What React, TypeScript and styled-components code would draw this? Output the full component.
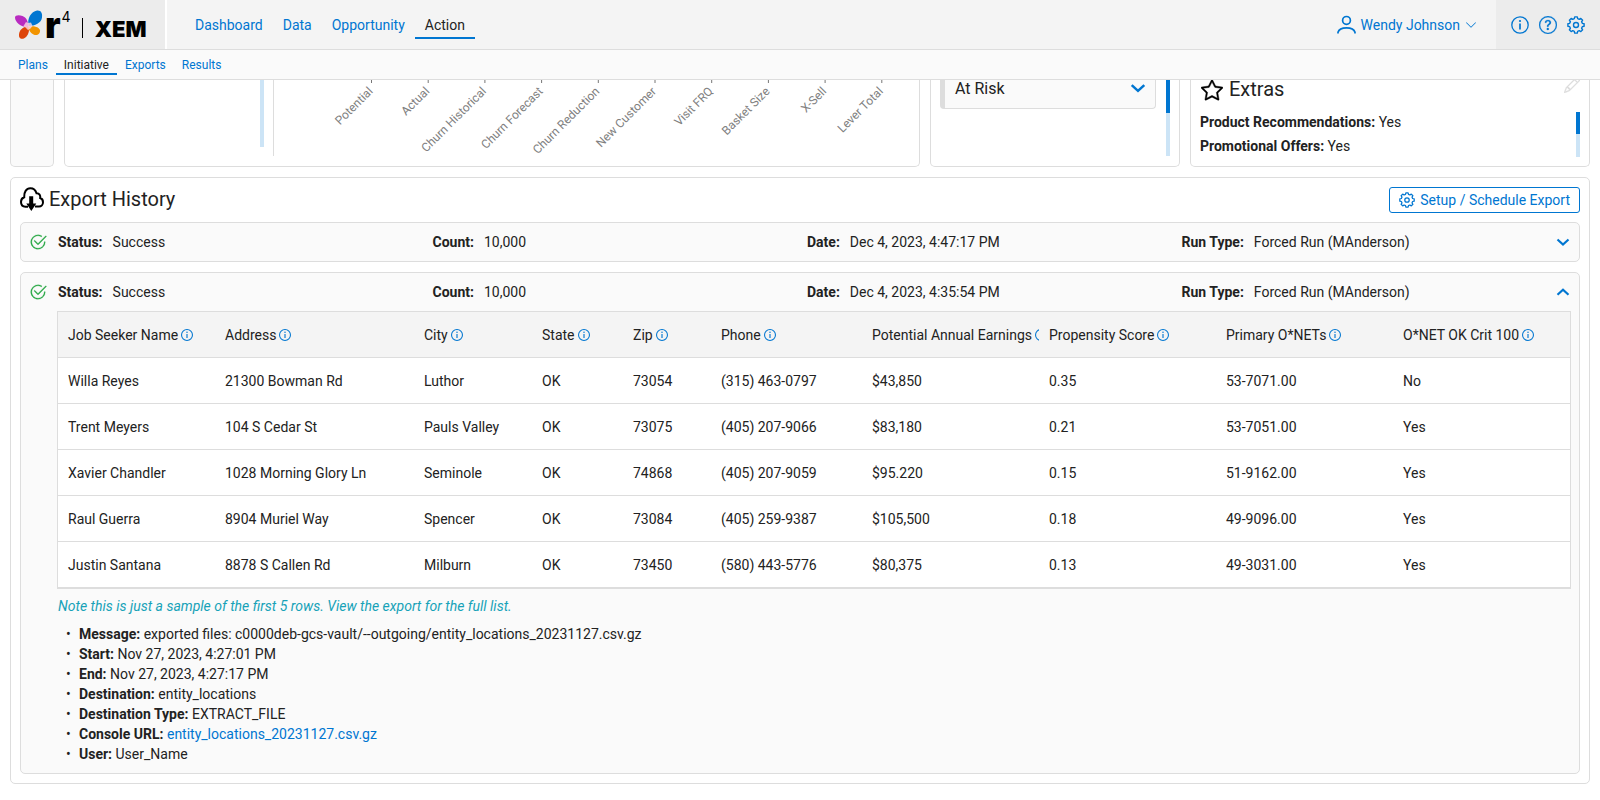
import React, { useState } from "react";
import styled, { createGlobalStyle, css } from "styled-components";
import {
  BsCheck2Circle,
  BsChevronDown,
  BsPencil,
  BsQuestionCircle,
  BsStar,
} from "react-icons/bs";

const color = {
  blue: "#0076d1",
  paleBlue: "#cce4f6",
  text: "#222222",
  line: "#dddddd",
  panel: "#fafafa",
  bar: "#f4f4f4",
  barDark: "#ececec",
  green: "#28a745",
  teal: "#17a2b8",
};

const GlobalStyle = createGlobalStyle`
  *, *::before, *::after { box-sizing: border-box; }
  body {
    margin: 0;
    background: #ffffff;
    color: ${color.text};
    font: 400 14px/20px Roboto, "Liberation Sans", sans-serif;
  }
  svg { display: block; flex: none; }
  button { font: inherit; color: inherit; cursor: pointer; }
  a { color: ${color.blue}; text-decoration: none; }
`;

/* ---------- header ---------- */

const TopBar = styled.header`
  display: flex;
  height: 50px;
  background: ${color.bar};
  border-bottom: 1px solid ${color.line};
`;

const Brand = styled.a`
  display: flex;
  align-items: center;
  width: 167px;
  padding-left: 14px;
  background: ${color.barDark};
  border-right: 2px solid #ffffff;
  color: #000000;
  font-family: Inter, Roboto, sans-serif;
`;

const BrandLetter = styled.span`
  margin-left: 2px;
  font-size: 36px;
  line-height: 36px;
  font-weight: 900;
`;

const BrandPower = styled.sup`
  align-self: flex-start;
  margin-left: 1px;
  padding-top: 9px;
  font-size: 14px;
  line-height: 16px;
  font-weight: 400;
`;

const BrandRule = styled.span`
  width: 1px;
  height: 20px;
  margin: 6px 12px 0 11px;
  background: #000000;
`;

const BrandProduct = styled.span`
  padding-top: 8px;
  font-size: 22px;
  line-height: 20px;
  font-weight: 900;
`;

const NavList = styled.nav<{ $small?: boolean }>`
  display: flex;
  align-items: flex-end;
  ${(p) =>
    p.$small
      ? css`
          position: relative;
          z-index: 1;
          height: 30px;
          padding: 0 10px 4px;
          background: ${color.panel};
          border-bottom: 1px solid ${color.line};
          font-size: 12px;
        `
      : css`
          padding: 0 18px 10px;
        `}
`;

const NavLink = styled.a<{ $active?: boolean; $small?: boolean }>`
  padding: ${(p) => (p.$small ? "0 8px" : "0 10px 2px")};
  line-height: ${(p) => (p.$small ? "16px" : "20px")};
  border-bottom: 2px solid ${(p) => (p.$active ? color.blue : "transparent")};
  color: ${(p) => (p.$active ? color.text : color.blue)};
`;

const UserButton = styled.button`
  display: flex;
  align-items: center;
  gap: 5px;
  margin-left: auto;
  padding: 0 19px;
  border: 0;
  background: none;
  color: ${color.blue};
`;

const Tools = styled.div`
  display: flex;
  align-items: center;
  gap: 10px;
  padding: 0 15px;
  background: ${color.barDark};
`;

const IconButton = styled.button`
  display: block;
  padding: 0;
  border: 0;
  background: none;
  color: ${color.blue};
`;

/* ---------- upper cards ---------- */

const CardRow = styled.section`
  display: grid;
  grid-template-columns: 44px minmax(0, 1fr) 250px 400px;
  gap: 10px;
  padding: 0 10px;
`;

const CardEnd = styled.div<{ $tinted?: boolean }>`
  display: flex;
  min-height: 87px;
  padding: 0 9px 10px;
  border: solid ${color.line};
  border-width: 0 1px 1px;
  border-radius: 0 0 5px 5px;
  background: ${(p) => (p.$tinted ? color.panel : "#ffffff")};
`;

const Track = styled.div<{ $height: number; $thumb?: number }>`
  flex: none;
  width: 4px;
  height: ${(p) => p.$height}px;
  background: ${color.paleBlue};
  &::before {
    content: "";
    display: block;
    height: ${(p) => p.$thumb ?? 0}px;
    background: ${color.blue};
  }
`;

const ListPane = styled.div`
  display: flex;
  justify-content: flex-end;
  width: 190px;
`;

const ChartPane = styled.div`
  flex: 1;
  min-width: 0;
  margin-left: 9px;
  border-left: 1px solid ${color.line};
  svg { width: 100%; }
`;

const SegmentButton = styled.button`
  display: flex;
  flex: 1;
  align-items: flex-start;
  justify-content: space-between;
  align-self: flex-start;
  height: 29px;
  margin-right: 10px;
  padding: 0 9px 0 10px;
  border: solid ${color.line};
  border-width: 0 1px 1px 5px;
  border-radius: 0 0 4px 4px;
  background: ${color.panel};
  font-size: 16px;
  line-height: 17px;
`;

const ExtrasCard = styled(CardEnd)`
  display: block;
  padding-bottom: 8px;
`;

const Heading = styled.h2`
  display: flex;
  align-items: center;
  gap: 5px;
  margin: 0;
  font-size: 20px;
  line-height: 24px;
  font-weight: 400;
`;

const EditButton = styled(IconButton)`
  display: flex;
  align-items: flex-end;
  height: 13px;
  overflow: hidden;
  color: ${color.line};
`;

const ExtrasHead = styled.div`
  display: flex;
  align-items: flex-start;
  justify-content: space-between;
  height: 30px;
  ${Heading} {
    height: 18px;
    line-height: 18px;
  }
  ${Heading} svg {
    margin: 2px 1px 0;
    color: #000000;
  }
`;

const ExtrasBody = styled.div`
  display: flex;
  align-items: center;
  justify-content: space-between;
  p { margin: 0; line-height: 24px; }
`;

/* ---------- export history ---------- */

const History = styled.section`
  display: flex;
  flex-direction: column;
  gap: 10px;
  margin: 10px;
  padding: 9px;
  border: 1px solid ${color.line};
  border-radius: 5px;
`;

const HistoryHead = styled.div`
  display: flex;
  align-items: flex-start;
  justify-content: space-between;
  margin-bottom: -1px;
`;

const OutlineButton = styled.button`
  display: flex;
  align-items: center;
  gap: 5px;
  height: 26px;
  padding: 0 9px;
  border: 1px solid ${color.blue};
  border-radius: 3px;
  background: #ffffff;
  color: ${color.blue};
`;

const RunCard = styled.article`
  border: 1px solid ${color.line};
  border-radius: 5px;
  background: ${color.panel};
`;

const RunHead = styled.div`
  display: flex;
  align-items: center;
  height: 38px;
  padding: 0 9px 0 8px;
  > svg { color: ${color.green}; }
`;

const RunFacts = styled.dl`
  display: grid;
  flex: 1;
  grid-template-columns: repeat(4, 1fr);
  margin: 0 0 0 11px;
  div { display: flex; gap: 10px; }
  dt { font-weight: 700; }
  dd { margin: 0; }
`;

const RunBody = styled.div`
  padding: 0 8px 9px 36px;
`;

const TableFrame = styled.div`
  border: 1px solid ${color.line};
  background: #ffffff;
`;

const SampleTable = styled.table`
  width: 100%;
  table-layout: fixed;
  border-spacing: 0;
  th, td {
    height: 46px;
    padding: 0 0 0 10px;
    border-bottom: 1px solid ${color.line};
    text-align: left;
    font-weight: 400;
    white-space: nowrap;
    overflow: hidden;
  }
  th { background: ${color.bar}; }
`;

const ColumnLabel = styled.div`
  display: flex;
  align-items: center;
  gap: 3px;
`;

const Note = styled.p`
  margin: 7px 0 8px 1px;
  color: ${color.teal};
  font-style: italic;
`;

const Details = styled.ul`
  margin: 0;
  padding: 0 0 0 22px;
  list-style: none;
  li::before {
    content: "•";
    display: inline-block;
    width: 13px;
    margin-left: -13px;
  }
`;

/* ---------- drawings ---------- */

const Butterfly = () => (
  <svg width="29" height="30" viewBox="0 0 29 30" aria-hidden="true">
    <path d="M14.500 16C13 8 17 2 23 .6 27 .2 28.500 3 28 7.500 27.300 13 21 16 14.500 16Z" fill="#0076d1" />
    <path d="M14.500 17C7 17.500 1 12 1 7.500 1 5 5 4.600 8.500 6 12.500 7.600 14 11 14.500 17Z" fill="#b92bc0" />
    <path d="M14.500 16.500C8 16.500 4.500 21 5 26 5.400 29.500 9.500 29.800 12.500 26.500 15 23.500 15.500 20 14.500 16.500Z" fill="#dd4409" />
    <path d="M14.500 16.500C20 15.500 25.500 17 26 20.500 26.400 24 23 26 19.500 24.500 16 23 14.500 19.500 14.500 16.500Z" fill="#f29400" />
    <path d="M12 12C13.500 13 15.500 13 17 12.500L18.500 16 16.500 18.500 14 20 11.500 17.500 9.500 16Z" fill="#ffd9e6" opacity=".8" />
  </svg>
);

const CloudExport = () => (
  <svg width="24" height="24" viewBox="0 0 24 24" fill="none" aria-hidden="true">
    <path
      d="M8 19.800H5.500C2.600 19.500 1 17.400 1 14.900 1 12.700 2.200 10.900 4.200 10.200 3.800 5.300 6.300 1.200 10.300 1.200 13.600 1.200 15.700 3.300 16.500 6.300 19.300 6.200 20.700 8.300 20.200 11 22 11.600 23 13.200 23 15.200 23 17.600 21.300 19.400 19 19.400H15"
      stroke="#000"
      strokeWidth="2"
    />
    <path d="M9.200 9.200H13.200V16.500H16.300L11.300 24 6.300 16.500H9.200Z" fill="#000" />
  </svg>
);

const Person = () => (
  <svg width="19" height="19" viewBox="0 0 19 19" fill="none" stroke="currentColor" strokeWidth="1.700" aria-hidden="true">
    <circle cx="9.500" cy="5.400" r="3.900" />
    <path d="M1 18.500V17.300C1.800 14.600 5.200 12.900 9.500 12.900 13.800 12.900 17.200 14.600 18 17.300V18.500" />
  </svg>
);

const Info = ({ size }: { size: number }) => (
  <svg width={size} height={size} viewBox="0 0 18 18" fill="none" stroke="currentColor" strokeWidth={size > 14 ? 1.3 : 1.6} aria-hidden="true">
    <circle cx="9" cy="9" r="8.200" />
    <path d="M9 7.500V13.500" strokeWidth="1.700" />
    <circle cx="9" cy="5" r="1.100" fill="currentColor" stroke="none" />
  </svg>
);

const gearOutline = Array.from({ length: 8 }, (_, tooth) =>
  [[-15, 6.500], [-9, 8.200], [9, 8.200], [15, 6.500]].map(([offset, radius]) => {
    const angle = ((tooth * 45 + offset) * Math.PI) / 180;
    return `${(9 + radius * Math.sin(angle)).toFixed(2)},${(9 - radius * Math.cos(angle)).toFixed(2)}`;
  }).join(" "),
).join(" ");

const Gear = ({ size }: { size: number }) => (
  <svg width={size} height={size} viewBox="0 0 18 18" fill="none" stroke="currentColor" strokeWidth="1.400" strokeLinejoin="round" aria-hidden="true">
    <polygon points={gearOutline} />
    <circle cx="9" cy="9" r="2.500" />
  </svg>
);

const Chevron = ({ size, up }: { size: number; up?: boolean }) => (
  <svg width={size} height={size} viewBox="0 0 14 14" fill="none" aria-hidden="true">
    <path
      d={up ? "M1.500 9.700 7 4.700 12.500 9.700" : "M1.500 4.500 7 9.500 12.500 4.500"}
      stroke={color.blue}
      strokeWidth="2.200"
    />
  </svg>
);

const axisLabels = [
  "Potential",
  "Actual",
  "Churn Historical",
  "Churn Forecast",
  "Churn Reduction",
  "New Customer",
  "Visit FRQ",
  "Basket Size",
  "X-Sell",
  "Lever Total",
];

const LeverAxis = () => (
  <svg height="76" viewBox="0 0 636 76" role="img" aria-label="Lever chart axis">
    {axisLabels.map((label, i) => {
      const x = 97.500 + i * 56.700;
      return (
        <g key={label}>
          <path d={`M${x} 0V3`} stroke="#777" />
          <text
            transform={`translate(${x + 2} 12) rotate(-45)`}
            textAnchor="end"
            fontSize="12"
            fill="#808080"
          >
            {label}
          </text>
        </g>
      );
    })}
  </svg>
);

/* ---------- data ---------- */

const columns: [string, number][] = [
  ["Job Seeker Name", 157],
  ["Address", 199],
  ["City", 118],
  ["State", 91],
  ["Zip", 88],
  ["Phone", 151],
  ["Potential Annual Earnings", 177],
  ["Propensity Score", 177],
  ["Primary O*NETs", 177],
  ["O*NET OK Crit 100", 177],
];

const people = [
  ["Willa Reyes", "21300 Bowman Rd", "Luthor", "OK", "73054", "(315) 463-0797", "$43,850", "0.35", "53-7071.00", "No"],
  ["Trent Meyers", "104 S Cedar St", "Pauls Valley", "OK", "73075", "(405) 207-9066", "$83,180", "0.21", "53-7051.00", "Yes"],
  ["Xavier Chandler", "1028 Morning Glory Ln", "Seminole", "OK", "74868", "(405) 207-9059", "$95.220", "0.15", "51-9162.00", "Yes"],
  ["Raul Guerra", "8904 Muriel Way", "Spencer", "OK", "73084", "(405) 259-9387", "$105,500", "0.18", "49-9096.00", "Yes"],
  ["Justin Santana", "8878 S Callen Rd", "Milburn", "OK", "73450", "(580) 443-5776", "$80,375", "0.13", "49-3031.00", "Yes"],
];

const Run = ({ date, initiallyOpen, children }: { date: string; initiallyOpen?: boolean; children?: React.ReactNode }) => {
  const [open, setOpen] = useState(!!initiallyOpen);
  return (
    <RunCard>
      <RunHead>
        <BsCheck2Circle size={18} strokeWidth={0.2} aria-hidden="true" />
        <RunFacts>
          <div><dt>Status:</dt><dd>Success</dd></div>
          <div><dt>Count:</dt><dd>10,000</dd></div>
          <div><dt>Date:</dt><dd>{date}</dd></div>
          <div><dt>Run Type:</dt><dd>Forced Run (MAnderson)</dd></div>
        </RunFacts>
        <IconButton aria-label="Toggle run details" aria-expanded={open} onClick={() => setOpen(!open)}>
          <Chevron size={14} up={open} />
        </IconButton>
      </RunHead>
      {open && children && <RunBody>{children}</RunBody>}
    </RunCard>
  );
};

export default function App() {
  return (
    <>
      <GlobalStyle />
      <TopBar>
        <Brand href="#home">
          <Butterfly />
          <BrandLetter>r</BrandLetter>
          <BrandPower>4</BrandPower>
          <BrandRule />
          <BrandProduct>XEM</BrandProduct>
        </Brand>
        <NavList aria-label="Main">
          <NavLink href="#dashboard">Dashboard</NavLink>
          <NavLink href="#data">Data</NavLink>
          <NavLink href="#opportunity">Opportunity</NavLink>
          <NavLink href="#action" $active aria-current="page">Action</NavLink>
        </NavList>
        <UserButton>
          <Person />
          Wendy Johnson
          <BsChevronDown size={12} aria-hidden="true" />
        </UserButton>
        <Tools>
          <IconButton aria-label="Information"><Info size={18} /></IconButton>
          <IconButton aria-label="Help"><BsQuestionCircle size={18} strokeWidth={0.2} /></IconButton>
          <IconButton aria-label="Settings"><Gear size={18} /></IconButton>
        </Tools>
      </TopBar>
      <NavList $small aria-label="Action">
        <NavLink $small href="#plans">Plans</NavLink>
        <NavLink $small href="#initiative" $active aria-current="page">Initiative</NavLink>
        <NavLink $small href="#exports">Exports</NavLink>
        <NavLink $small href="#results">Results</NavLink>
      </NavList>

      <main>
        <CardRow>
          <CardEnd $tinted />
          <CardEnd>
            <ListPane><Track $height={67} /></ListPane>
            <ChartPane><LeverAxis /></ChartPane>
          </CardEnd>
          <CardEnd>
            <SegmentButton aria-expanded={false}>
              At Risk
              <Chevron size={16} />
            </SegmentButton>
            <Track $height={76} $thumb={33} />
          </CardEnd>
          <ExtrasCard>
            <ExtrasHead>
              <Heading>
                <BsStar size={22} strokeWidth={0.3} aria-hidden="true" />
                Extras
              </Heading>
              <EditButton aria-label="Edit extras"><BsPencil size={16} strokeWidth={0.3} /></EditButton>
            </ExtrasHead>
            <ExtrasBody>
              <div>
                <p><b>Product Recommendations:</b> Yes</p>
                <p><b>Promotional Offers:</b> Yes</p>
              </div>
              <Track $height={45} $thumb={22} />
            </ExtrasBody>
          </ExtrasCard>
        </CardRow>

        <History>
          <HistoryHead>
            <Heading>
              <CloudExport />
              Export History
            </Heading>
            <OutlineButton>
              <Gear size={16} />
              Setup / Schedule Export
            </OutlineButton>
          </HistoryHead>
          <Run date="Dec 4, 2023, 4:47:17 PM" />
          <Run date="Dec 4, 2023, 4:35:54 PM" initiallyOpen>
            <TableFrame>
              <SampleTable>
                <colgroup>
                  {columns.map(([name, width]) => <col key={name} width={width} />)}
                </colgroup>
                <thead>
                  <tr>
                    {columns.map(([name]) => (
                      <th key={name} scope="col">
                        <ColumnLabel>
                          {name}
                          <IconButton aria-label={`About ${name}`}><Info size={12} /></IconButton>
                        </ColumnLabel>
                      </th>
                    ))}
                  </tr>
                </thead>
                <tbody>
                  {people.map((row) => (
                    <tr key={row[0]}>
                      {row.map((value, i) => <td key={i}>{value}</td>)}
                    </tr>
                  ))}
                </tbody>
              </SampleTable>
            </TableFrame>
            <Note>Note this is just a sample of the first 5 rows. View the export for the full list.</Note>
            <Details>
              <li><b>Message:</b> exported files: c0000deb-gcs-vault/--outgoing/entity_locations_20231127.csv.gz</li>
              <li><b>Start:</b> Nov 27, 2023, 4:27:01 PM</li>
              <li><b>End:</b> Nov 27, 2023, 4:27:17 PM</li>
              <li><b>Destination:</b> entity_locations</li>
              <li><b>Destination Type:</b> EXTRACT_FILE</li>
              <li><b>Console URL:</b> <a href="#export-file">entity_locations_20231127.csv.gz</a></li>
              <li><b>User:</b> User_Name</li>
            </Details>
          </Run>
        </History>
      </main>
    </>
  );
}
